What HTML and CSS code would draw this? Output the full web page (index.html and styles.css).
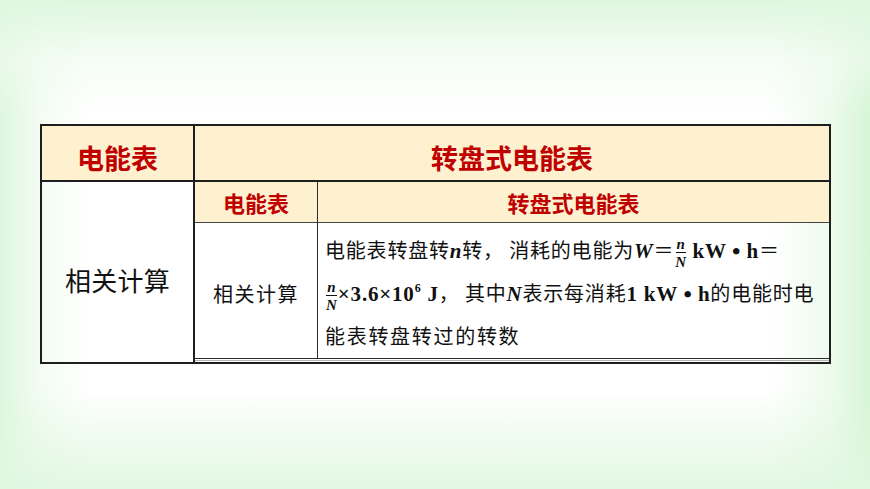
FILE: index.html
```html
<!DOCTYPE html>
<html lang="zh">
<head>
<meta charset="utf-8">
<link rel="stylesheet" href="styles.css">
</head>
<body>
<div class="page">
  <div class="table">
    <div class="cell head big-head col1">电能表</div>
    <div class="cell head big-head col2">转盘式电能表</div>
    <div class="cell col1 side">相关计算</div>
    <div class="cell col2 nest-wrap">
      <div class="nest">
        <div class="ncell head small-head ncol1">电能表</div>
        <div class="ncell head small-head ncol2">转盘式电能表</div>
        <div class="ncell ncol1 nside">相关计算</div>
        <div class="ncell ncol2 body">
          <div class="line">电能表转盘转<i class="m">n</i>转，&nbsp;消耗的电能为<i class="m">W</i><span class="eq">＝</span><span class="frac"><i class="num">n</i><i class="den">N</i></span>&nbsp;<b class="m">kW</b>&nbsp;<b class="dot">•</b>&nbsp;<b class="m">h</b><span class="eq">＝</span></div>
          <div class="line"><span class="frac"><i class="num">n</i><i class="den">N</i></span><b class="m">×3.6×10<sup>6</sup>&nbsp;J</b>，&nbsp;其中<i class="m">N</i>表示每消耗<b class="m">1&nbsp;kW</b>&nbsp;<b class="dot">•</b>&nbsp;<b class="m">h</b>的电能时电</div>
          <div class="line wide">能表转盘转过的转数</div>
        </div>
      </div>
      <div class="tail"></div>
    </div>
  </div>
</div>
</body>
</html>
```
FILE: styles.css
```css
* { box-sizing: border-box; }
html, body { margin: 0; padding: 0; }
body { font-family: "Noto Sans CJK SC", sans-serif; color: #111; }

.page {
  width: 870px;
  height: 489px;
  padding: 124px 0 0 40px;
  background:
    linear-gradient(to bottom, rgba(222,247,222,1) 0, rgba(240,251,240,0.6) 60px, rgba(255,255,255,0) 115px),
    linear-gradient(to top, rgba(224,247,224,0.95) 0, rgba(255,255,255,0) 100px),
    linear-gradient(to right, rgba(222,247,222,1) 0, rgba(235,250,235,0.6) 40px, rgba(255,255,255,0) 90px),
    linear-gradient(to left, rgba(214,245,214,1) 0, rgba(230,249,230,0.7) 40px, rgba(255,255,255,0) 100px),
    #fff;
  overflow: hidden;
}

.table {
  width: 791px;
  display: grid;
  grid-template-columns: 153px 1fr;
  grid-template-rows: 56px 180px;
  border: 2px solid #1e1e1e;
}

.cell { display: flex; align-items: center; justify-content: center; }
.col1 { border-right: 2px solid #1e1e1e; }
.head { background: #fdf1cf; color: #c00000; font-weight: 700; }
.big-head { font-size: 27px; border-bottom: 2px solid #1e1e1e; padding-top: 8px; }

.side { font-size: 26px; padding-top: 14px; letter-spacing: 0.3px; }

.nest-wrap { display: flex; flex-direction: column; align-items: stretch; justify-content: flex-start; }
.nest {
  display: grid;
  grid-template-columns: 123px 1fr;
  grid-template-rows: 41px 136px;
}
.ncell { display: flex; align-items: center; justify-content: center; border-bottom: 1px solid #2a2a2a; }
.ncol1 { border-right: 1px solid #2a2a2a; }
.small-head { font-size: 22px; border-bottom: 1px solid #444; }
.nside { font-size: 20px; letter-spacing: 1.5px; padding-top: 6px; }
.tail { flex: 1; border-top: 1px solid #b5b5b5; margin-top: 1px; }

.body {
  display: block;
  padding: 5px 0 0 7px;
  font-size: 20px;
  line-height: 43px;
  text-align: left;
  letter-spacing: 0.8px;
}
.line { white-space: nowrap; height: 43px; }
.wide { letter-spacing: 1.7px; }

.m { font-family: "Liberation Serif", serif; font-weight: 700; font-size: 21px; }
i.m { font-style: italic; }
b.m { font-style: normal; }
sup { font-size: 12px; vertical-align: 9px; line-height: 0; }
.eq { font-weight: 400; }
.dot { font-family: "Liberation Serif", serif; font-weight: 700; font-size: 24px; vertical-align: -1px; }

.frac {
  display: inline-flex;
  flex-direction: column;
  align-items: center;
  vertical-align: middle;
  line-height: 14px;
  margin: 0 1px;
  font-family: "Liberation Serif", serif;
  font-weight: 700;
  font-style: italic;
  font-size: 15px;
  letter-spacing: 0;
}
.frac .num { border-bottom: 1.5px solid #111; padding: 0 1px 1px; }
.frac .den { padding-top: 2px; }
```
